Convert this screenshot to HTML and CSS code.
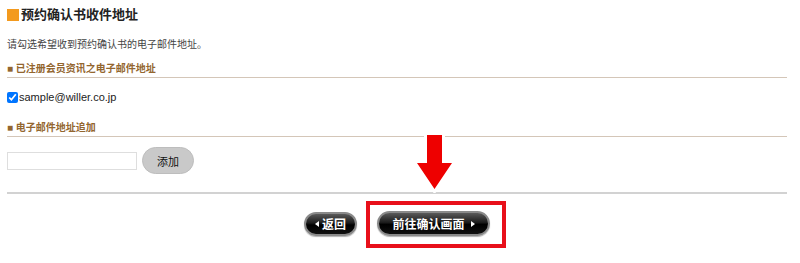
FILE: index.html
```html
<!DOCTYPE html>
<html lang="zh-CN">
<head>
    <meta charset="UTF-8">
    <meta name="viewport" content="width=device-width, initial-scale=1.0">
    <title>预约确认书收件地址</title>
    <link rel="stylesheet" href="styles.css">
</head>
<body>

    <div class="page">
        <h2 class="title"><span class="title-mark"></span>预约确认书收件地址</h2>
        <p class="lead">请勾选希望收到预约确认书的电子邮件地址。</p>

        <h3 class="section-head">■ 已注册会员资讯之电子邮件地址</h3>
        <label class="mail-check">
            <input type="checkbox" checked> sample@willer.co.jp
        </label>

        <h3 class="section-head second">■ 电子邮件地址追加</h3>
        <div class="add-row">
            <input type="text" class="mail-input">
            <button class="add-btn">添加</button>
        </div>

        <div class="divider"></div>

        <div class="actions">
            <button class="black-btn back-btn">
                <svg class="tri" width="4" height="6" viewBox="0 0 4 6"><path d="M4 0 V6 L0 3 Z" fill="#fff"/></svg>返回
            </button>
            <div class="next-wrap">
                <button class="black-btn next-btn">
                    前往确认画面<svg class="tri right" width="4" height="6" viewBox="0 0 4 6"><path d="M0 0 V6 L4 3 Z" fill="#fff"/></svg>
                </button>
                <div class="highlight"></div>
                <svg class="arrow" width="45" height="62" viewBox="0 0 45 62">
                    <path d="M15 4 H30 V32 H40 L22.5 58 L5 32 H15 Z" fill="#ee0000" stroke="#fff" stroke-width="6" stroke-linejoin="miter" paint-order="stroke"/>
                </svg>
            </div>
        </div>
    </div>

</body>
</html>
```

FILE: styles.css
```css
body {
    margin: 0;
    background-color: #fff;
    font-family: "Liberation Sans", "Noto Sans CJK SC", sans-serif;
    color: #333;
}
.page {
    width: 780px;
    padding: 0 0 20px 7px;
}
.title {
    margin: 6px 0 0;
    font-size: 13px;
    line-height: 18px;
    font-weight: bold;
    color: #222;
    display: flex;
    align-items: center;
}
.title-mark {
    display: inline-block;
    width: 12px;
    height: 12px;
    background-color: #f39a1e;
    margin-right: 2px;
}
.lead {
    margin: 14px 0 0;
    font-size: 10px;
    line-height: 14px;
    color: #444;
}
.section-head {
    margin: 10px 0 0;
    font-size: 10px;
    line-height: 14px;
    font-weight: bold;
    color: #93662f;
    padding-bottom: 1px;
    border-bottom: 1px solid #d4c6b8;
}
.section-head.second {
    margin-top: 17px;
}
.mail-check {
    display: flex;
    align-items: center;
    margin-top: 12px;
    height: 14px;
    font-size: 11px;
    color: #222;
}
.mail-check input {
    margin: 0 1px 0 0;
    width: 11px;
    height: 11px;
}
.add-row {
    display: flex;
    align-items: center;
    margin-top: 10px;
    height: 27px;
}
.mail-input {
    width: 130px;
    height: 18px;
    box-sizing: border-box;
    border: 1px solid #dedede;
    padding: 0 4px;
    margin: 0;
}
.add-btn {
    margin-left: 5px;
    width: 52px;
    height: 27px;
    border: 1px solid #bdbdbd;
    border-radius: 14px;
    background-color: #c9c9c9;
    font-family: "Noto Sans CJK SC", sans-serif;
    font-size: 11px;
    color: #111;
    padding: 0;
}
.divider {
    margin-top: 18px;
    height: 2px;
    background-color: #d2d2d2;
}
.actions {
    margin-top: 17px;
    display: flex;
    justify-content: center;
    align-items: center;
    gap: 20px;
}
.black-btn {
    display: flex;
    align-items: center;
    justify-content: center;
    box-sizing: border-box;
    border: 2px solid #8a8a8a;
    border-radius: 13px;
    background: linear-gradient(to bottom, #5a5a5a 0%, #1c1c1c 45%, #000 55%, #111 100%);
    color: #fff;
    font-family: "Noto Sans CJK SC", sans-serif;
    font-weight: bold;
    font-size: 12px;
    padding: 0;
    box-shadow: 0 1px 1px rgba(0,0,0,0.3);
}
.back-btn {
    width: 53px;
    height: 24px;
}
.next-btn {
    width: 113px;
    height: 25px;
}
.tri {
    margin-right: 3px;
}
.tri.right {
    margin: 0 0 0 6px;
}
.next-wrap {
    position: relative;
}
.highlight {
    position: absolute;
    top: -10px;
    left: -11px;
    right: -16px;
    bottom: -12px;
    border: 4px solid #e8101a;
}
.arrow {
    position: absolute;
    bottom: calc(100% + 18px);
    left: 50%;
    margin-left: -22px;
}
```
